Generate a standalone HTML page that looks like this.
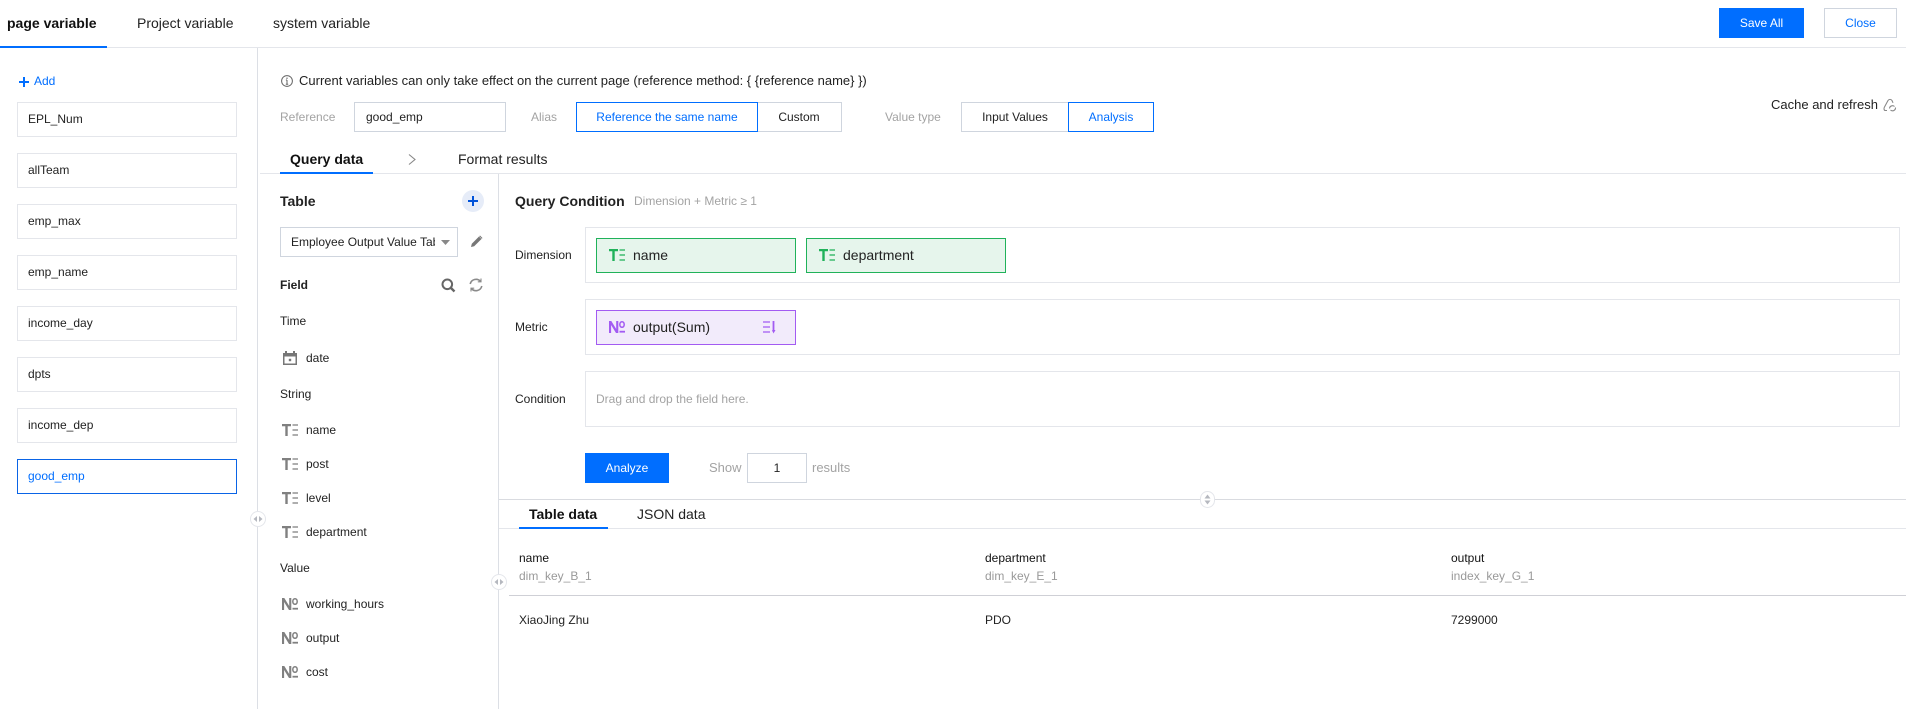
<!DOCTYPE html>
<html><head><meta charset="utf-8"><style>
html,body{margin:0;padding:0;background:#fff}
body{width:1906px;height:709px;position:relative;overflow:hidden;font-family:"Liberation Sans",sans-serif;font-size:12px;color:#222}
.t{position:absolute;line-height:20px;height:20px;white-space:nowrap}
.b{position:absolute;box-sizing:border-box;background:#fff}
.h{position:absolute;background:#e4e6eb}
.item{position:absolute;left:17px;width:220px;height:35px;box-sizing:border-box;border:1px solid #e4e6eb;line-height:33px;padding-left:10px;white-space:nowrap}
.g{color:#a3a3a3}.bl{color:#006eff}
.btn{position:absolute;box-sizing:border-box;text-align:center;line-height:28px;height:30px;border:1px solid #cfd5de;background:#fff}
.bold{font-weight:bold}
.f14{font-size:14px}
svg{position:absolute;overflow:visible}
</style></head><body>
<svg width="0" height="0" style="position:absolute"><defs>
<g id="te"><path d="M0 0h9v2.200H5.700V12H3.300V2.200H0z" fill="currentColor"/><path d="M10.500 1h5.500M10.500 6h5.500M10.500 11h5.500" fill="none" stroke="currentColor" stroke-width="1.500" opacity=".85"/></g>
<g id="no"><path d="M0 0h2.300l4.900 8V0h2.100v12H7L2.100 4v8H0z" fill="currentColor"/><ellipse cx="13" cy="3.500" rx="2.200" ry="2.800" fill="none" stroke="currentColor" stroke-width="1.500"/><path d="M10.500 10.700h5.500" fill="none" stroke="currentColor" stroke-width="1.800"/></g>
</defs></svg>

<!-- top tabs -->
<div class="t f14 bold" style="left:7px;top:13px;color:#111">page variable</div>
<div class="t f14" style="left:137px;top:13px">Project variable</div>
<div class="t f14" style="left:273px;top:13px">system variable</div>
<div class="h" style="left:0;top:47px;width:1906px;height:1px"></div>
<div class="h" style="left:0;top:46px;width:107px;height:2px;background:#006eff"></div>
<div class="btn" style="left:1719px;top:8px;width:85px;background:#006eff;border-color:#006eff;color:#fff">Save All</div>
<div class="btn bl" style="left:1824px;top:8px;width:73px">Close</div>

<!-- sidebar -->
<div class="h" style="left:257px;top:48px;width:1px;height:661px;background:#dcdfe5"></div>
<svg style="left:19px;top:77px" width="10" height="10"><path d="M5 0v10M0 5h10" stroke="#006eff" stroke-width="2"/></svg>
<div class="t bl" style="left:34px;top:71px">Add</div>
<div class="item" style="top:102px">EPL_Num</div>
<div class="item" style="top:153px">allTeam</div>
<div class="item" style="top:204px">emp_max</div>
<div class="item" style="top:255px">emp_name</div>
<div class="item" style="top:306px">income_day</div>
<div class="item" style="top:357px">dpts</div>
<div class="item" style="top:408px">income_dep</div>
<div class="item bl" style="top:459px;border-color:#0a64e6">good_emp</div>
<svg style="left:250px;top:511px" width="16" height="16"><circle cx="8" cy="8" r="7.5" fill="#fff" stroke="#e4e6eb"/><path d="M7 5v6L3.500 8zM9 5v6L12.500 8z" fill="#b5b8bf"/></svg>

<!-- info row -->
<svg style="left:281px;top:75px" width="12" height="12"><circle cx="6" cy="6" r="5.400" fill="none" stroke="#666"/><path d="M6 5v4.200M4.800 9.300h2.400M4.900 5H6" stroke="#666" fill="none"/><circle cx="6" cy="3.200" r=".7" fill="#666"/></svg>
<div class="t" style="left:299px;top:71px;font-size:13px">Current variables can only take effect on the current page (reference method: { {reference name} })</div>
<div class="t g" style="left:280px;top:107px">Reference</div>
<div class="btn" style="left:354px;top:102px;width:152px;text-align:left;padding-left:11px">good_emp</div>
<div class="t g" style="left:531px;top:107px">Alias</div>
<div class="btn" style="left:756px;top:102px;width:86px">Custom</div>
<div class="btn bl" style="left:576px;top:102px;width:182px;border-color:#006eff">Reference the same name</div>
<div class="t g" style="left:885px;top:107px">Value type</div>
<div class="btn" style="left:961px;top:102px;width:108px">Input Values</div>
<div class="btn bl" style="left:1068px;top:102px;width:86px;border-color:#006eff">Analysis</div>
<div class="t" style="left:1771px;top:95px;font-size:13px">Cache and refresh</div>
<svg style="left:1883px;top:99px" width="14" height="13" fill="none" stroke="#888" stroke-width="1.100"><path d="M4 11.500H2.500C1 11.500.5 9.500 1.500 8L5 1.500C6 0 8 0 9 1.500L10 3.800"/><path d="M6.500 9.500a3 3 0 0 1 5-2M12.500 8.500a3 3 0 0 1-5 2.500"/></svg>

<!-- query tabs -->
<div class="h" style="left:260px;top:173px;width:1646px;height:1px"></div>
<div class="h" style="left:280px;top:172px;width:93px;height:2px;background:#006eff"></div>
<div class="t f14 bold" style="left:290px;top:149px;color:#111">Query data</div>
<svg style="left:408px;top:154px" width="8" height="11"><path d="M1 .5l6 5-6 5" fill="none" stroke="#888" stroke-width="1.100"/></svg>
<div class="t f14" style="left:458px;top:149px">Format results</div>
<div class="h" style="left:498px;top:174px;width:1px;height:535px;background:#dcdfe5"></div>

<!-- table col -->
<div class="t f14 bold" style="left:280px;top:191px">Table</div>
<svg style="left:462px;top:190px" width="22" height="22"><circle cx="11" cy="11" r="11" fill="#e6ecf8"/><path d="M11 6v10M6 11h10" stroke="#0052d9" stroke-width="2"/></svg>
<div class="btn" style="left:280px;top:227px;width:178px;text-align:left;padding-left:10px;overflow:hidden"><span style="display:block;width:144px;overflow:hidden;white-space:nowrap">Employee Output Value Table</span></div>
<svg style="left:441px;top:240px" width="9" height="6"><path d="M0 0h9L4.500 5z" fill="#888"/></svg>
<svg style="left:471px;top:235px" width="12" height="12"><path d="M0 12l.8-3.200L8 1.500l2.500 2.500-7.300 7.300zM9 .5l2.500 2.500-.7.700L8.300 1.200z" fill="#777"/></svg>
<div class="t bold" style="left:280px;top:275px">Field</div>
<svg style="left:441px;top:278px" width="14" height="14"><circle cx="6.300" cy="6.300" r="4.800" fill="none" stroke="#666" stroke-width="2"/><path d="M10 10l3.500 3.500" stroke="#666" stroke-width="2.400"/></svg>
<svg style="left:469px;top:278px" width="14" height="14" fill="none" stroke="#8a8a8a" stroke-width="1.600"><path d="M1.200 6A6 6 0 0 1 11.500 3.300"/><path d="M12.800 8A6 6 0 0 1 2.500 10.700"/><path d="M12 .5v3.300H8.800M2 13.500v-3.300h3.200" stroke-width="1.100"/></svg>
<div class="t" style="left:280px;top:311px">Time</div>
<svg style="left:283px;top:351px" width="14" height="14"><path d="M0 2h14v12H0z" fill="#777"/><path d="M2 0h2v2H2zM10 0h2v2h-2z" fill="#777"/><path d="M1.500 5.500h11v7h-11z" fill="#fff"/><path d="M5.800 7.800h2.400v2.400H5.800z" fill="#777"/></svg>
<div class="t" style="left:306px;top:348px">date</div>
<div class="t" style="left:280px;top:384px">String</div>
<svg style="left:282px;top:424px;color:#808080" width="16" height="12"><use href="#te"/></svg><div class="t" style="left:306px;top:420px">name</div>
<svg style="left:282px;top:458px;color:#808080" width="16" height="12"><use href="#te"/></svg><div class="t" style="left:306px;top:454px">post</div>
<svg style="left:282px;top:492px;color:#808080" width="16" height="12"><use href="#te"/></svg><div class="t" style="left:306px;top:488px">level</div>
<svg style="left:282px;top:526px;color:#808080" width="16" height="12"><use href="#te"/></svg><div class="t" style="left:306px;top:522px">department</div>
<div class="t" style="left:280px;top:558px">Value</div>
<svg style="left:282px;top:598px;color:#808080" width="16" height="12"><use href="#no"/></svg><div class="t" style="left:306px;top:594px">working_hours</div>
<svg style="left:282px;top:632px;color:#808080" width="16" height="12"><use href="#no"/></svg><div class="t" style="left:306px;top:628px">output</div>
<svg style="left:282px;top:666px;color:#808080" width="16" height="12"><use href="#no"/></svg><div class="t" style="left:306px;top:662px">cost</div>

<!-- query condition -->
<div class="t f14 bold" style="left:515px;top:191px">Query Condition</div>
<div class="t g" style="left:634px;top:191px">Dimension + Metric ≥ 1</div>
<div class="t" style="left:515px;top:245px">Dimension</div>
<div class="b" style="left:585px;top:227px;width:1315px;height:56px;border:1px solid #e4e6eb"></div>
<div class="b" style="left:596px;top:238px;width:200px;height:35px;border:1px solid #20b25a;background:#e6f5ec"></div>
<svg style="left:609px;top:249px;color:#20b25a" width="16" height="12"><use href="#te"/></svg>
<div class="t f14" style="left:633px;top:245px">name</div>
<div class="b" style="left:806px;top:238px;width:200px;height:35px;border:1px solid #20b25a;background:#e6f5ec"></div>
<svg style="left:819px;top:249px;color:#20b25a" width="16" height="12"><use href="#te"/></svg>
<div class="t f14" style="left:843px;top:245px">department</div>

<div class="t" style="left:515px;top:317px">Metric</div>
<div class="b" style="left:585px;top:299px;width:1315px;height:56px;border:1px solid #e4e6eb"></div>
<div class="b" style="left:596px;top:310px;width:200px;height:35px;border:1px solid #a35bf2;background:#f2ebfb"></div>
<svg style="left:609px;top:321px;color:#a35bf2" width="16" height="12"><use href="#no"/></svg>
<div class="t f14" style="left:633px;top:317px">output(Sum)</div>
<svg style="left:763px;top:321px" width="14" height="13" fill="none" stroke="#a35bf2" stroke-width="1.300"><path d="M0 1h7M0 6h7M0 11h7"/><path d="M10.500 0v11" stroke-width="1.800"/><path d="M9 9h3.500L10.500 12.500z" fill="#a35bf2" stroke="none"/></svg>

<div class="t" style="left:515px;top:389px">Condition</div>
<div class="b" style="left:585px;top:371px;width:1315px;height:56px;border:1px solid #e4e6eb"></div>
<div class="t g" style="left:596px;top:389px">Drag and drop the field here.</div>
<div class="btn" style="left:585px;top:453px;width:84px;background:#006eff;border-color:#006eff;color:#fff">Analyze</div>
<div class="t g" style="left:709px;top:458px;font-size:13px">Show</div>
<div class="btn" style="left:747px;top:453px;width:60px">1</div>
<div class="t g" style="left:812px;top:458px;font-size:13px">results</div>

<!-- results -->
<div class="h" style="left:499px;top:499px;width:1407px;height:1px;background:#d9dbe0"></div>
<svg style="left:1200px;top:491px" width="15" height="17"><rect x=".5" y=".5" width="14" height="16" rx="7" fill="#fff" stroke="#e4e6eb"/><path d="M4.500 7.500L7.500 3.500L10.500 7.500zM4.500 9.500h6L7.500 13.500z" fill="#b5b8bf"/></svg>
<div class="h" style="left:499px;top:528px;width:1407px;height:1px"></div>
<div class="h" style="left:519px;top:527px;width:89px;height:2px;background:#006eff"></div>
<div class="t f14 bold" style="left:529px;top:504px;color:#111">Table data</div>
<div class="t f14" style="left:637px;top:504px">JSON data</div>
<div class="t" style="left:519px;top:548px;color:#111">name</div>
<div class="t" style="left:519px;top:566px;color:#999">dim_key_B_1</div>
<div class="t" style="left:985px;top:548px;color:#111">department</div>
<div class="t" style="left:985px;top:566px;color:#999">dim_key_E_1</div>
<div class="t" style="left:1451px;top:548px;color:#111">output</div>
<div class="t" style="left:1451px;top:566px;color:#999">index_key_G_1</div>
<div class="h" style="left:509px;top:595px;width:1397px;height:1px;background:#cfd0d6"></div>
<div class="t" style="left:519px;top:610px">XiaoJing Zhu</div>
<div class="t" style="left:985px;top:610px">PDO</div>
<div class="t" style="left:1451px;top:610px">7299000</div>
<svg style="left:491px;top:574px" width="16" height="16"><circle cx="8" cy="8" r="7.500" fill="#fff" stroke="#e4e6eb"/><path d="M7 5v6L3.500 8zM9 5v6L12.500 8z" fill="#b5b8bf"/></svg>
</body></html>
